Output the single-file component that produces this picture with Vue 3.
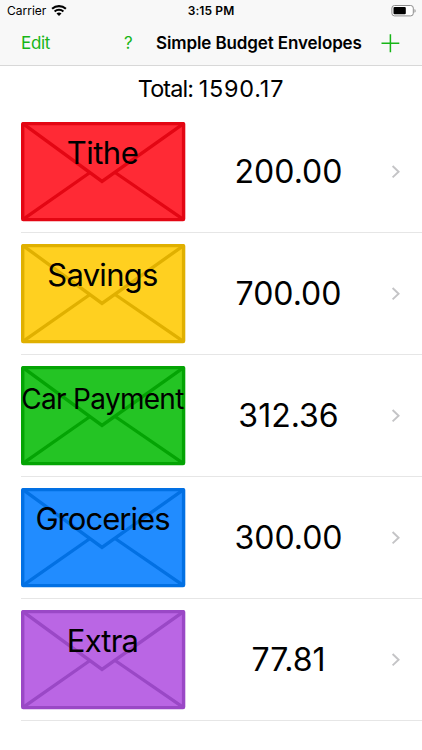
<script setup>
const envelopes = [
  { name: 'Tithe', amount: '200.00', theme: 'red' },
  { name: 'Savings', amount: '700.00', theme: 'yellow' },
  { name: 'Car Payment', amount: '312.36', theme: 'green' },
  { name: 'Groceries', amount: '300.00', theme: 'blue' },
  { name: 'Extra', amount: '77.81', theme: 'purple' },
]
</script>

<template>
  <div class="screen">
    <header class="top">
      <div class="status">
        <div class="carrier">
          <span>Carrier</span>
          <svg class="wifi" width="16" height="12" viewBox="0 0 16 12" fill="none" stroke="#000">
            <path d="M1.1 3.8C5 .2 11 .2 14.9 3.8" stroke-width="2.1" />
            <path d="M3.6 6.4C6.1 4.1 9.9 4.1 12.4 6.4" stroke-width="2" />
            <path d="M8 10.9L5.5 8.4C6.9 7.1 9.1 7.1 10.5 8.4Z" fill="#000" stroke="none" />
          </svg>
        </div>
        <span class="clock">3:15 PM</span>
        <svg class="battery" width="26" height="12" viewBox="0 0 26 12">
          <rect x="0.9" y="0.5" width="21.4" height="10.4" rx="2.6" fill="#fff" stroke="#8c8c8c" stroke-width="1" />
          <rect x="2.5" y="2" width="12.3" height="7.3" rx="1.1" fill="#000" />
          <path d="M23.5 3.9C25 4.4 25 7.2 23.5 7.7Z" fill="#8c8c8c" />
        </svg>
      </div>
      <nav class="bar">
        <span class="edit">Edit</span>
        <span class="help">?</span>
        <h1>Simple Budget Envelopes</h1>
        <svg class="add" width="20" height="20" viewBox="0 0 20 20" stroke="#16b516" stroke-width="1.5">
          <path d="M0.5 9.2H18.3M9.4 0.2V18.2" />
        </svg>
      </nav>
    </header>
    <p class="total"><span class="total-label">Total: </span><span class="total-value">1590.17</span></p>
    <ul class="list">
      <li v-for="e in envelopes" :key="e.name" class="row" :class="e.theme">
        <div class="envelope">
          <svg width="165" height="100" viewBox="0 0 165 100">
            <rect class="paper" x="1.7" y="1.6" width="160.9" height="96" rx="0.5" stroke-width="3.4" />
            <path class="fold" d="M3 2.3L81 59.4L161.5 2.3M3.1 96.6L68.3 51M161.2 96.6L94.8 51" stroke-width="3.3" />
          </svg>
          <span class="name">{{ e.name }}</span>
        </div>
        <span class="amount">{{ e.amount }}</span>
        <svg class="chevron" width="9" height="14" viewBox="0 0 9 14">
          <path d="M1.6 1L7.6 6.7L1.6 12.4" fill="none" stroke="#c4c4c6" stroke-width="1.9" />
        </svg>
      </li>
    </ul>
  </div>
</template>

<style>
body {
  margin: 0;
  background: #fff;
}
</style>

<style scoped>
.screen {
  width: 422px;
  height: 750px;
  overflow: hidden;
  background: #fff;
  color: #000;
  font-family: Inter, "Liberation Sans", sans-serif;
}
.top {
  height: 65px;
  background: #f8f8f8;
  border-bottom: 1px solid #d8d8d8;
}
.status {
  display: grid;
  grid-template-columns: 1fr auto 1fr;
  align-items: center;
  height: 22px;
  padding: 0 5px 0 7px;
  box-sizing: border-box;
  font-size: 12px;
  line-height: 22px;
}
.carrier {
  display: flex;
  align-items: center;
  gap: 5px;
}
.clock {
  margin-left: -2px;
  font-weight: 600;
  letter-spacing: 0.1px;
}
.battery {
  justify-self: end;
}
.bar {
  display: flex;
  align-items: center;
  height: 43px;
  padding-left: 21px;
  font-size: 17px;
  line-height: 43px;
}
.edit,
.help {
  color: #16b516;
}
.edit {
  width: 103px;
  letter-spacing: -0.3px;
}
.help {
  width: 32px;
}
h1 {
  width: 225px;
  margin: 0;
  font-size: 17px;
  font-weight: 600;
  letter-spacing: -0.11px;
  white-space: nowrap;
}
.total {
  height: 45px;
  margin: 0;
  font-size: 23.4px;
  line-height: 45px;
  text-align: center;
}
.total-label {
  letter-spacing: -0.9px;
}
.total-value {
  letter-spacing: 0.8px;
}
.list {
  margin: 0 0 0 21px;
  padding: 0;
  list-style: none;
}
.row {
  display: flex;
  align-items: center;
  height: 122px;
  box-sizing: border-box;
  border-bottom: 1px solid #e6e6e6;
}
.envelope {
  position: relative;
  width: 165px;
  height: 100px;
}
.envelope svg {
  display: block;
}
.paper {
  fill: var(--paper);
  stroke: var(--line);
}
.fold {
  fill: none;
  stroke: var(--line);
}
.name {
  position: absolute;
  inset: 11px 2px auto 0;
  font-size: 31px;
  line-height: 40px;
  letter-spacing: var(--tracking);
  text-align: center;
  white-space: nowrap;
}
.amount {
  width: 205px;
  font-size: 32px;
  text-align: center;
}
.red {
  --paper: #ff2a35;
  --line: #e30613;
  --tracking: -0.5px;
}
.yellow {
  --paper: #ffd020;
  --line: #e0b000;
  --tracking: -0.7px;
}
.green {
  --paper: #24c424;
  --line: #04a404;
  --tracking: -0.7px;
}
.blue {
  --paper: #218cff;
  --line: #0270e3;
  --tracking: -0.95px;
}
.purple {
  --paper: #ba66e4;
  --line: #9a48c6;
  --tracking: -0.8px;
}
.green .name {
  top: 13px;
  font-size: 28px;
}
</style>
